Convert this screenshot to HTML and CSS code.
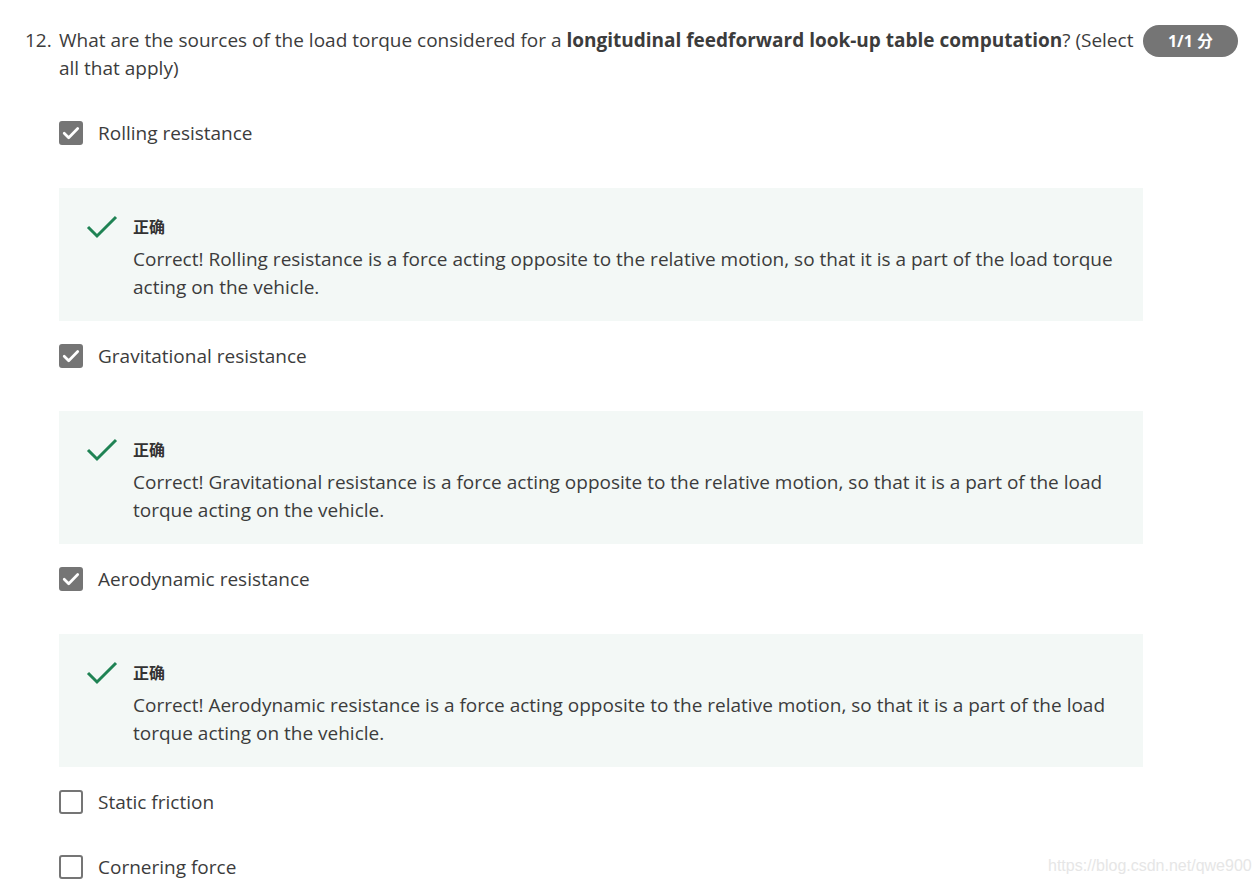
FILE: index.html
```html
<!DOCTYPE html>
<html lang="en">
<head>
<meta charset="utf-8">
<title>Quiz question 12</title>
<link rel="stylesheet" href="styles.css">
</head>
<body>
<div class="question">
  <div class="q-head">
    <div class="q-num">12.</div>
    <div class="q-text">What are the sources of the load torque considered for a <strong>longitudinal feedforward look-up table computation</strong>? (Select all that apply)</div>
    <div class="badge">1/1 分</div>
  </div>

  <div class="options">
    <div class="option">
      <span class="cb checked"><svg viewBox="0 0 24 24" width="24" height="24"><path d="M5.2 12.2l4.5 4.5 9-9.2" fill="none" stroke="#fff" stroke-width="2.7" stroke-linecap="round" stroke-linejoin="round"/></svg></span>
      <span class="label">Rolling resistance</span>
    </div>
    <div class="feedback">
      <svg class="tick" viewBox="0 0 32 24" width="32" height="24"><path d="M2 12l9 9L30 2" fill="none" stroke="#1f8354" stroke-width="3"/></svg>
      <div class="fb-body">
        <div class="fb-title">正确</div>
        <div class="fb-text">Correct! Rolling resistance is a force acting opposite to the relative motion, so that it is a part of the load torque acting on the vehicle.</div>
      </div>
    </div>

    <div class="option">
      <span class="cb checked"><svg viewBox="0 0 24 24" width="24" height="24"><path d="M5.2 12.2l4.5 4.5 9-9.2" fill="none" stroke="#fff" stroke-width="2.7" stroke-linecap="round" stroke-linejoin="round"/></svg></span>
      <span class="label">Gravitational resistance</span>
    </div>
    <div class="feedback">
      <svg class="tick" viewBox="0 0 32 24" width="32" height="24"><path d="M2 12l9 9L30 2" fill="none" stroke="#1f8354" stroke-width="3"/></svg>
      <div class="fb-body">
        <div class="fb-title">正确</div>
        <div class="fb-text">Correct! Gravitational resistance is a force acting opposite to the relative motion, so that it is a part of the load torque acting on the vehicle.</div>
      </div>
    </div>

    <div class="option">
      <span class="cb checked"><svg viewBox="0 0 24 24" width="24" height="24"><path d="M5.2 12.2l4.5 4.5 9-9.2" fill="none" stroke="#fff" stroke-width="2.7" stroke-linecap="round" stroke-linejoin="round"/></svg></span>
      <span class="label">Aerodynamic resistance</span>
    </div>
    <div class="feedback">
      <svg class="tick" viewBox="0 0 32 24" width="32" height="24"><path d="M2 12l9 9L30 2" fill="none" stroke="#1f8354" stroke-width="3"/></svg>
      <div class="fb-body">
        <div class="fb-title">正确</div>
        <div class="fb-text">Correct! Aerodynamic resistance is a force acting opposite to the relative motion, so that it is a part of the load torque acting on the vehicle.</div>
      </div>
    </div>

    <div class="option plain">
      <span class="cb"></span>
      <span class="label">Static friction</span>
    </div>
    <div class="option last">
      <span class="cb"></span>
      <span class="label">Cornering force</span>
    </div>
  </div>
</div>
<div class="watermark">https://blog.csdn.net/qwe900</div>
</body>
</html>
```
FILE: styles.css
```css
html, body {
  margin: 0;
  padding: 0;
  background: #fff;
}
body {
  font-family: "Open Sans", "Noto Sans CJK SC", sans-serif;
  color: #3c3c3c;
  font-size: 19px;
  line-height: 28px;
  position: relative;
  min-height: 882px;
}
.question {
  padding: 26px 0 0 25px;
}
.q-head {
  display: flex;
  align-items: flex-start;
}
.q-num {
  width: 34px;
  flex: none;
}
.q-text {
  width: 1084px;
  flex: none;
}
.q-text strong {
  font-weight: 700;
}
.badge {
  flex: none;
  margin-top: -1px;
  width: 95px;
  height: 32px;
  border-radius: 16px;
  background: #757575;
  color: #fff;
  font-weight: 700;
  font-size: 16px;
  line-height: 32px;
  text-align: center;
}
.options {
  margin-left: 34px;
  width: 1084px;
  padding-top: 39px;
}
.option {
  display: flex;
  align-items: center;
  height: 24px;
  margin-bottom: 43px;
}
.option.plain {
  margin-bottom: 41px;
}
.option.last {
  margin-bottom: 0;
}
.cb {
  width: 24px;
  height: 24px;
  box-sizing: border-box;
  border: 2px solid #757575;
  border-radius: 3px;
  flex: none;
  display: flex;
  align-items: center;
  justify-content: center;
}
.cb.checked {
  background: #757575;
}
.cb.checked svg {
  flex: none;
}
.label {
  margin-left: 15px;
}
.feedback {
  background: #f3f8f6;
  display: flex;
  align-items: flex-start;
  padding: 26px 26px 20px 27px;
  margin-bottom: 23px;
}
.tick {
  flex: none;
  margin-top: 1px;
}
.fb-body {
  margin-left: 15px;
}
.fb-title {
  font-family: "Noto Sans CJK SC", sans-serif;
  font-weight: 700;
  font-size: 16px;
  line-height: 24px;
  color: #333;
  margin-bottom: 7px;
}
.fb-text {
  line-height: 28px;
}
.watermark {
  position: absolute;
  left: 1048px;
  top: 852px;
  font-family: "Liberation Sans", Arial, sans-serif;
  font-size: 16px;
  color: #e6e6e6;
  white-space: nowrap;
}
```
